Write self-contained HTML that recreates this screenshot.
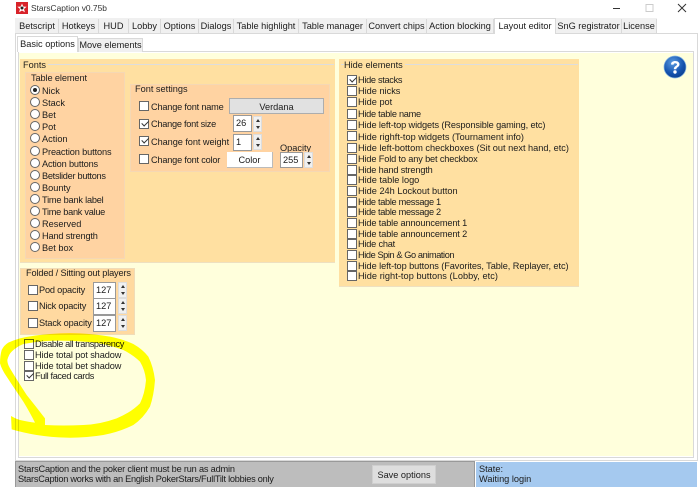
<!DOCTYPE html>
<html><head><meta charset="utf-8"><style>
html,body{margin:0;padding:0}
body{width:700px;height:487px;overflow:hidden;position:relative;background:#fff;font-family:"Liberation Sans",sans-serif;font-size:9.2px;color:#1c1c1c}
div,span,i{position:absolute;display:block;box-sizing:border-box}
.t{white-space:nowrap;line-height:12px;height:12px;margin-top:1px}
.tab{top:19px;height:14px;background:#f0f0f0;border-right:1px solid #d9d9d9;text-align:center;line-height:15px;white-space:nowrap}
.c{width:10px;height:10px;background:#fff;border:1px solid #666}
.c.k:after{content:"";position:absolute;left:1px;top:0;width:6px;height:3px;border-left:1px solid #333;border-bottom:1px solid #333;transform:rotate(-45deg) translate(0,1px)}
.r{width:10px;height:10px;border-radius:50%;background:#fff;border:1px solid #666;left:30px}
.in{background:#fff;border:1px solid #999;line-height:15px;padding-left:2px;height:17px}
.sp{width:9px;height:16px;background:#f0f0f0;border:1px solid #ddd}
.sp:before{content:"";position:absolute;left:2px;top:2px;border:2px solid transparent;border-top:0;border-bottom:3px solid #333}
.sp:after{content:"";position:absolute;left:2px;bottom:2px;border:2px solid transparent;border-bottom:0;border-top:3px solid #333}
</style></head><body>
<div style="left:0;top:0;width:700px;height:18px;background:#fff"></div>
<div style="left:16px;top:2px;width:12px;height:12px;background:#d8232a"></div>
<svg style="position:absolute;left:16px;top:2px" width="12" height="12"><path d="M6 1.500L7.300 4.600 10.600 4.800 8 7 8.900 10.200 6 8.500 3.100 10.200 4 7 1.400 4.800 4.700 4.600Z" fill="#fff"/><circle cx="6" cy="6" r="1.500" fill="#222"/></svg>
<div class="t" style="left:31px;top:1px;color:#333;font-size:8.4px">StarsCaption v0.75b</div>
<svg style="position:absolute;left:610px;top:0" width="85" height="16"><path d="M3 8.500H10" stroke="#333" stroke-width="1"/><rect x="36" y="4.500" width="7" height="7" fill="none" stroke="#ccc"/><path d="M68 4L76 12M76 4L68 12" stroke="#333" stroke-width="1"/></svg>

<div style="left:15px;top:18px;width:642px;height:15px;background:#f0f0f0"></div>
<div class="tab" style="left:16px;width:43px">Betscript</div>
<div class="tab" style="left:59px;width:40px">Hotkeys</div>
<div class="tab" style="left:99px;width:30px">HUD</div>
<div class="tab" style="left:129px;width:32px">Lobby</div>
<div class="tab" style="left:161px;width:38px">Options</div>
<div class="tab" style="left:199px;width:35px">Dialogs</div>
<div class="tab" style="left:234px;width:65px">Table highlight</div>
<div class="tab" style="left:299px;width:68px">Table manager</div>
<div class="tab" style="left:367px;width:60px">Convert chips</div>
<div class="tab" style="left:427px;width:67px">Action blocking</div>
<div class="tab" style="left:556px;width:66px">SnG registrator</div>
<div class="tab" style="left:622px;width:35px">License</div>

<div style="left:15px;top:33px;width:683px;height:428px;background:#fff;border:1px solid #d9d9d9"></div>
<div style="left:494px;top:18px;width:62px;height:16px;background:#fff;border:1px solid #d9d9d9;border-bottom:0;text-align:center;line-height:14px;white-space:nowrap">Layout editor</div>

<div style="left:18px;top:51px;width:676px;height:407px;background:#fff;border:1px solid #d9d9d9"></div>
<div style="left:19px;top:53px;width:674px;height:403px;background:#ffffdc"></div>
<div style="left:17px;top:36px;width:61px;height:16px;background:#fff;border:1px solid #d9d9d9;border-bottom:0;text-align:center;line-height:14px;white-space:nowrap">Basic options</div>
<div style="left:78px;top:38px;width:65px;height:14px;background:#f0f0f0;border:1px solid #d9d9d9;border-bottom:0;text-align:center;line-height:13px;white-space:nowrap">Move elements</div>

<svg style="position:absolute;left:663px;top:55px" width="24" height="24"><defs><radialGradient id="g" cx=".4" cy=".3" r=".8"><stop offset="0" stop-color="#5a9be0"/><stop offset=".6" stop-color="#1554b0"/><stop offset="1" stop-color="#0b3a86"/></radialGradient></defs><circle cx="12" cy="12" r="11" fill="url(#g)" stroke="#7fb0e0" stroke-width=".7"/><path d="M8 9.500C8 7 10 6 12.200 6 14.800 6 16.500 7.400 16.500 9.400 16.500 12 13.500 12 13.300 14.300H10.800C10.800 11 14 11 14 9.500 14 8.600 13.200 8.200 12.200 8.200 11.200 8.200 10.500 8.800 10.500 9.800Z" fill="#fff"/><circle cx="12" cy="17" r="1.700" fill="#fff"/></svg>

<!-- Fonts group -->
<div style="left:20px;top:59px;width:315px;height:204px;background:#ffe0a1;border-bottom:1px solid #eee0c0"></div>
<div style="left:23px;top:64px;width:311px;height:1px;background:#ddd"></div>
<div class="t" style="left:23px;top:58px;background:#ffe0a1;padding-right:2px">Fonts</div>
<div style="left:25px;top:72px;width:100px;height:187px;background:#ffd3a2;border:1px solid #f5d8b4"></div>
<div class="t" style="left:31px;top:71px;letter-spacing:-.1px">Table element</div>
<div class="r" style="top:85px"><i style="left:2px;top:2px;width:4px;height:4px;border-radius:50%;background:#222"></i></div><div class="t" style="left:42px;top:84px">Nick</div>
<div class="r" style="top:97px"></div><div class="t" style="left:42px;top:96px">Stack</div>
<div class="r" style="top:109px"></div><div class="t" style="left:42px;top:108px">Bet</div>
<div class="r" style="top:121px"></div><div class="t" style="left:42px;top:120px">Pot</div>
<div class="r" style="top:133px"></div><div class="t" style="left:42px;top:132px">Action</div>
<div class="r" style="top:146px"></div><div class="t" style="left:42px;top:145px;letter-spacing:-.12px">Preaction buttons</div>
<div class="r" style="top:158px"></div><div class="t" style="left:42px;top:157px;letter-spacing:-.16px">Action buttons</div>
<div class="r" style="top:170px"></div><div class="t" style="left:42px;top:169px;letter-spacing:-.28px">Betslider buttons</div>
<div class="r" style="top:182px"></div><div class="t" style="left:42px;top:181px">Bounty</div>
<div class="r" style="top:194px"></div><div class="t" style="left:42px;top:193px;letter-spacing:-.2px">Time bank label</div>
<div class="r" style="top:206px"></div><div class="t" style="left:42px;top:205px;letter-spacing:-.27px">Time bank value</div>
<div class="r" style="top:218px"></div><div class="t" style="left:42px;top:217px">Reserved</div>
<div class="r" style="top:230px"></div><div class="t" style="left:42px;top:229px;letter-spacing:-.15px">Hand strength</div>
<div class="r" style="top:242px"></div><div class="t" style="left:42px;top:241px">Bet box</div>

<div style="left:130px;top:84px;width:200px;height:88px;background:#ffd3a2;border:1px solid #f5d8b4"></div>
<div class="t" style="left:135px;top:82px">Font settings</div>
<div class="c" style="left:139px;top:101px"></div><div class="t" style="left:151px;top:100px;letter-spacing:-.19px">Change font name</div>
<div style="left:229px;top:98px;width:95px;height:16px;background:#e1e1e1;border:1px solid #adadad;text-align:center;line-height:16px">Verdana</div>
<div class="c k" style="left:139px;top:119px"></div><div class="t" style="left:151px;top:117px;letter-spacing:-.25px">Change font size</div>
<div class="in" style="left:233px;top:115px;width:19px">26</div><div class="sp" style="left:253px;top:116px"></div>
<div class="c k" style="left:139px;top:136px"></div><div class="t" style="left:151px;top:135px;letter-spacing:-.06px">Change font weight</div>
<div class="in" style="left:233px;top:134px;width:19px">1</div><div class="sp" style="left:253px;top:134px"></div>
<div class="c" style="left:139px;top:154px"></div><div class="t" style="left:151px;top:153px;letter-spacing:-.2px">Change font color</div>
<div style="left:227px;top:152px;width:46px;height:16px;background:#fff;border-right:1px solid #bbb;border-bottom:1px solid #bbb;text-align:center;line-height:17px">Color</div>
<div class="t" style="left:280px;top:141px">Opacity</div>
<div class="in" style="left:280px;top:152px;width:23px;height:16px">255</div><div class="sp" style="left:304px;top:152px"></div>

<!-- Hide elements -->
<div style="left:339px;top:59px;width:240px;height:228px;background:#ffe0a1;border-bottom:1px solid #eee0c0"></div>
<div style="left:341px;top:64px;width:237px;height:1px;background:#ddd"></div>
<div class="t" style="left:344px;top:58px;background:#ffe0a1;padding-right:2px">Hide elements</div>
<div class="c k" style="left:347px;top:75px"></div><div class="t" style="left:358px;top:73px;letter-spacing:-.3px">Hide stacks</div>
<div class="c" style="left:347px;top:86px"></div><div class="t" style="left:358px;top:84px">Hide nicks</div>
<div class="c" style="left:347px;top:97px"></div><div class="t" style="left:358px;top:95px">Hide pot</div>
<div class="c" style="left:347px;top:109px"></div><div class="t" style="left:358px;top:107px;letter-spacing:-.27px">Hide table name</div>
<div class="c" style="left:347px;top:120px"></div><div class="t" style="left:358px;top:118px;letter-spacing:-.11px">Hide left-top widgets (Responsible gaming, etc)</div>
<div class="c" style="left:347px;top:131px"></div><div class="t" style="left:358px;top:130px">Hide righft-top widgets (Tournament info)</div>
<div class="c" style="left:347px;top:143px"></div><div class="t" style="left:358px;top:141px">Hide left-bottom checkboxes (Sit out next hand, etc)</div>
<div class="c" style="left:347px;top:154px"></div><div class="t" style="left:358px;top:152px;letter-spacing:-.14px">Hide Fold to any bet checkbox</div>
<div class="c" style="left:347px;top:165px"></div><div class="t" style="left:358px;top:163px;letter-spacing:-.17px">Hide hand strength</div>
<div class="c" style="left:347px;top:175px"></div><div class="t" style="left:358px;top:173px">Hide table logo</div>
<div class="c" style="left:347px;top:186px"></div><div class="t" style="left:358px;top:184px">Hide 24h Lockout button</div>
<div class="c" style="left:347px;top:197px"></div><div class="t" style="left:358px;top:195px;letter-spacing:-.3px">Hide table message 1</div>
<div class="c" style="left:347px;top:207px"></div><div class="t" style="left:358px;top:205px;letter-spacing:-.3px">Hide table message 2</div>
<div class="c" style="left:347px;top:218px"></div><div class="t" style="left:358px;top:216px;letter-spacing:-.13px">Hide table announcement 1</div>
<div class="c" style="left:347px;top:229px"></div><div class="t" style="left:358px;top:227px;letter-spacing:-.13px">Hide table announcement 2</div>
<div class="c" style="left:347px;top:239px"></div><div class="t" style="left:358px;top:237px;letter-spacing:-.2px">Hide chat</div>
<div class="c" style="left:347px;top:250px"></div><div class="t" style="left:358px;top:248px;letter-spacing:-.4px">Hide Spin &amp; Go animation</div>
<div class="c" style="left:347px;top:261px"></div><div class="t" style="left:358px;top:259px;letter-spacing:-.07px">Hide left-top buttons (Favorites, Table, Replayer, etc)</div>
<div class="c" style="left:347px;top:271px"></div><div class="t" style="left:358px;top:269px;letter-spacing:.05px">Hide right-top buttons (Lobby, etc)</div>

<!-- Folded -->
<div style="left:20px;top:268px;width:115px;height:67px;background:#ffd9a0;border:1px solid #f0dcb8"></div>
<div class="t" style="left:26px;top:266px;letter-spacing:-.14px">Folded / Sitting out players</div>
<div class="c" style="left:28px;top:285px"></div><div class="t" style="left:39px;top:283px;letter-spacing:-.18px">Pod opacity</div>
<div class="in" style="left:93px;top:282px;width:23px">127</div><div class="sp" style="left:118px;top:282px"></div>
<div class="c" style="left:28px;top:301px"></div><div class="t" style="left:39px;top:299px;letter-spacing:-.2px">Nick opacity</div>
<div class="in" style="left:93px;top:298px;width:23px">127</div><div class="sp" style="left:118px;top:298px"></div>
<div class="c" style="left:28px;top:318px"></div><div class="t" style="left:39px;top:316px;letter-spacing:-.15px">Stack opacity</div>
<div class="in" style="left:93px;top:315px;width:23px">127</div><div class="sp" style="left:118px;top:315px"></div>

<!-- Bottom checks -->
<div class="c" style="left:24px;top:339px"></div><div class="t" style="left:35px;top:337px;letter-spacing:-.38px">Disable all transparency</div>
<div class="c" style="left:24px;top:350px"></div><div class="t" style="left:35px;top:348px;letter-spacing:-.1px">Hide total pot shadow</div>
<div class="c" style="left:24px;top:361px"></div><div class="t" style="left:35px;top:359px;letter-spacing:-.1px">Hide total bet shadow</div>
<div class="c k" style="left:24px;top:371px"></div><div class="t" style="left:35px;top:369px;letter-spacing:-.37px">Full faced cards</div>

<!-- Status -->
<div style="left:15px;top:461px;width:460px;height:26px;background:#bdbdbd;border:1px solid #999;border-bottom:0"></div>
<div class="t" style="left:18px;top:462px;letter-spacing:-.185px">StarsCaption and the poker client must be run as admin</div>
<div class="t" style="left:18px;top:472px;letter-spacing:-.25px">StarsCaption works with an English PokerStars/FullTilt lobbies only</div>
<div style="left:372px;top:465px;width:64px;height:19px;background:#dedede;border:1px solid #cfcfcf;text-align:center;line-height:18px;white-space:nowrap">Save options</div>
<div style="left:476px;top:462px;width:221px;height:25px;background:#a5c9ef"></div>
<div class="t" style="left:479px;top:462px">State:</div>
<div class="t" style="left:479px;top:472px">Waiting login</div>

<svg style="position:absolute;left:0;top:0;mix-blend-mode:multiply" width="700" height="487"><g transform="translate(0,330) scale(.3333)"><path fill="#ffff00" fill-rule="evenodd" d="M60 25Q105 15 150 12Q195 8 240 10Q285 12 330 20Q370 28 400 42Q428 58 445 80Q460 110 465 150Q462 195 450 230Q430 265 400 285Q360 305 310 315Q255 324 200 323Q155 322 110 315Q70 308 35 298L33 258Q46 266 60 270Q85 276 105 278Q90 248 70 215Q45 178 20 140Q5 118 0 100Q0 78 5 60Q12 46 25 38Q42 30 60 25ZM135 265Q108 230 80 195Q52 152 30 115Q22 102 22 90Q26 74 35 65Q50 50 70 42Q105 35 140 33Q180 31 220 33Q262 35 300 40Q338 48 370 60Q400 75 420 95Q435 120 438 150Q435 190 420 220Q392 248 350 265Q300 283 250 285Q190 288 135 285Z"/></g></svg>
</body></html>
